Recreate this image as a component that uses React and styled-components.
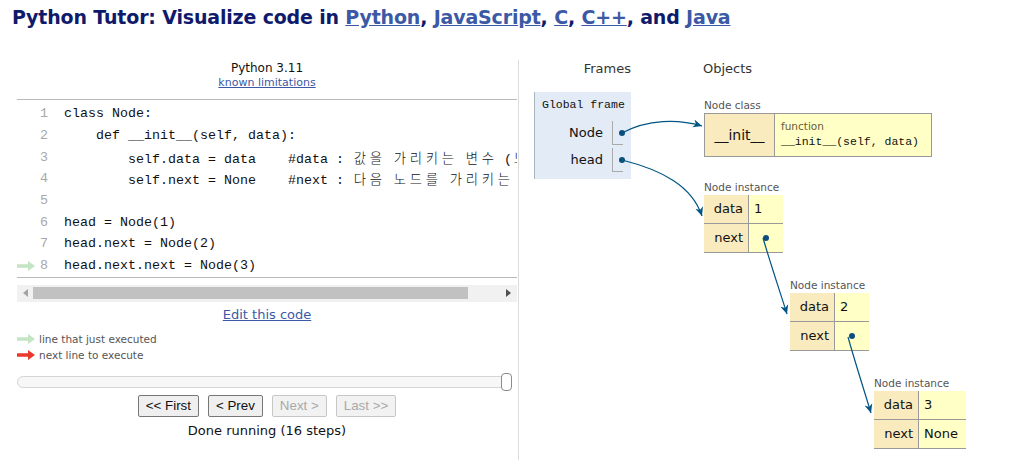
import React from 'react'
import styled, { createGlobalStyle } from 'styled-components'

const GlobalStyle = createGlobalStyle`
  html, body {
    margin: 0;
    padding: 0;
    background: #fff;
    font-family: "DejaVu Sans", Verdana, sans-serif;
  }
`

const Page = styled.div`
  position: relative;
  width: 1014px;
  height: 460px;
  overflow: hidden;
`

const Title = styled.h1`
  margin: 0;
  padding: 5px 0 0 12px;
  font-size: 19px;
  letter-spacing: -0.17px;
  line-height: 24px;
  font-weight: bold;
  color: #0f1a6b;
  white-space: nowrap;
`

const TitleLink = styled.a`
  color: #3c59a6;
  text-decoration: underline;
`

const Main = styled.div`
  display: flex;
  margin-top: 31px;
`

const CodePane = styled.div`
  width: 500px;
  margin-left: 17px;
  display: flex;
  flex-direction: column;
`

const LangLabel = styled.div`
  text-align: center;
  font-size: 12px;
  line-height: 16px;
  color: #111;
`

const SmallLink = styled.a`
  display: block;
  text-align: center;
  font-size: 11px;
  line-height: 14px;
  color: #3c59a6;
  text-decoration: underline;
`

const CodeBox = styled.div`
  margin-top: 9px;
  border-top: 1px solid #bbb;
  border-bottom: 1px solid #bbb;
  padding-top: 3px;
  overflow: hidden;
`

const CodeRow = styled.div`
  display: flex;
  align-items: center;
  height: 21.7px;
  font-family: "Liberation Mono", "Noto Sans CJK KR", monospace;
  font-size: 13.33px;
  white-space: pre;
`

const ArrowCell = styled.span`
  flex-shrink: 0;
  width: 18px;
  height: 10px;
  display: flex;
  align-items: center;
`

const LineNo = styled.span`
  flex-shrink: 0;
  width: 13px;
  text-align: right;
  color: #a8a8a8;
  margin-right: 16px;
`

const CodeText = styled.span`
  flex-shrink: 0;
  color: #111;
`

const HangulChar = styled.span`
  display: inline-block;
  width: 16px;
  text-align: center;
  font-family: "Noto Sans CJK KR", sans-serif;
  font-weight: 300;
`

const ScrollTrack = styled.div`
  margin-top: 7px;
  height: 17px;
  background: #f1f1f1;
  display: flex;
  align-items: center;
  padding: 0 6px;
  gap: 5px;
`

const ScrollThumb = styled.div`
  width: 435px;
  height: 12px;
  background: #c1c1c1;
`

const ScrollSpacer = styled.div`
  flex: 1;
`

const EditLink = styled.a`
  display: block;
  margin-top: 5px;
  text-align: center;
  font-size: 13px;
  line-height: 16px;
  color: #3c59a6;
  text-decoration: underline;
`

const Legend = styled.div`
  margin-top: 8px;
  display: flex;
  flex-direction: column;
`

const LegendRow = styled.div`
  display: flex;
  align-items: center;
  gap: 4px;
  height: 16px;
  font-size: 10.5px;
  color: #555;
`

const SliderTrack = styled.div`
  margin-top: 10px;
  height: 18px;
  display: flex;
  align-items: center;
`

const SliderBar = styled.div`
  flex: 1;
  height: 10px;
  border: 1px solid #d6d6d6;
  border-radius: 6px;
  background: #f7f7f7;
`

const SliderHandle = styled.div`
  width: 9px;
  height: 16px;
  margin-left: -6px;
  margin-right: 5px;
  border: 1px solid #8a8a8a;
  border-radius: 4px;
  background: #fff;
`

const ButtonRow = styled.div`
  margin-top: 4px;
  display: flex;
  justify-content: center;
  gap: 9px;
`

const NavButton = styled.button`
  height: 22px;
  padding: 0 7px;
  font-family: "Liberation Sans", Arial, sans-serif;
  font-size: 13.33px;
  border-radius: 2px;
  border: 1px solid ${p => (p.disabled ? '#c6c6c6' : '#767676')};
  background: ${p => (p.disabled ? '#f2f2f2' : '#efefef')};
  color: ${p => (p.disabled ? '#a9a9a9' : '#111')};
`

const Status = styled.div`
  margin-top: 6px;
  text-align: center;
  font-size: 13px;
  line-height: 16px;
  color: #111;
`

const VizPane = styled.div`
  flex: 1;
  margin-left: 1px;
  border-left: 1px solid #dcdcdc;
  height: 400px;
  display: flex;
`

const FramesCol = styled.div`
  margin-left: 15px;
  width: 97px;
`

const Header = styled.div`
  font-size: 13px;
  line-height: 18px;
  color: #333;
  text-align: ${p => p.align || 'left'};
`

const FrameBox = styled.div`
  margin-top: 14px;
  background: #e2ebf6;
  border-left: 1px solid #a9b6bf;
  padding: 6px 8px 7px 7px;
`

const FrameName = styled.div`
  font-family: "Liberation Mono", monospace;
  font-size: 11.5px;
  line-height: 14px;
  color: #111;
  white-space: nowrap;
  margin-bottom: 9px;
`

const VarGrid = styled.div`
  display: grid;
  grid-template-columns: 1fr auto;
  column-gap: 9px;
  row-gap: 3px;
`

const VarName = styled.div`
  text-align: right;
  font-size: 13px;
  line-height: 24px;
  color: #111;
`

const VarSlot = styled.div`
  width: 10px;
  height: 23px;
  border-left: 1px solid #aaa;
  border-bottom: 1px solid #aaa;
  display: flex;
  align-items: center;
  justify-content: flex-end;
`

const Dot = styled.span`
  display: block;
  width: 6px;
  height: 6px;
  border-radius: 50%;
  background: #0d4f7c;
  margin-right: ${p => p.mr || 0}px;
`

const HeapCol = styled.div`
  position: relative;
  margin-left: 72px;
  flex: 1;
`

const HeapObj = styled.div`
  position: absolute;
  left: ${p => p.x}px;
  top: ${p => p.y}px;
`

const ObjLabel = styled.div`
  font-size: 10.5px;
  line-height: 15px;
  color: #555;
  white-space: nowrap;
`

const ClassBox = styled.div`
  display: flex;
  border: 1px solid #999;
  height: 42px;
`

const ClassKey = styled.div`
  width: 69px;
  background: #faebbf;
  border-right: 1px solid #999;
  display: flex;
  align-items: center;
  justify-content: center;
  font-size: 14px;
  color: #111;
`

const ClassVal = styled.div`
  width: 150px;
  background: #ffffc6;
  padding: 6px 0 0 6px;
`

const FuncTag = styled.div`
  font-size: 10.5px;
  line-height: 13px;
  color: #6b5b3a;
`

const FuncSig = styled.div`
  font-family: "Liberation Mono", monospace;
  font-size: 11.5px;
  line-height: 17px;
  color: #111;
`

const InstTable = styled.div`
  display: grid;
  grid-template-columns: 44px auto;
`

const InstKey = styled.div`
  height: 28px;
  background: #faebbf;
  border-bottom: 1px solid #999;
  text-align: right;
  padding-right: 5px;
  font-size: 13px;
  line-height: 28px;
  color: #111;
`

const InstVal = styled.div`
  height: 28px;
  min-width: 21px;
  background: #ffffc6;
  border-bottom: 1px solid #999;
  border-left: 1px solid #999;
  padding: 0 ${p => (p.pointer ? 0 : 8)}px 0 ${p => (p.pointer ? 0 : 5)}px;
  font-size: 13px;
  line-height: 28px;
  color: #111;
  display: flex;
  align-items: center;
  justify-content: ${p => (p.pointer ? 'center' : 'flex-start')};
`

const ArrowLayer = styled.svg`
  position: absolute;
  left: 0;
  top: 0;
  pointer-events: none;
`

const LineArrow = ({ color }) => (
  <svg width="18" height="10" viewBox="0 0 18 10">
    <path d="M0 3.3 H11 V0 L18 5 L11 10 V6.7 H0 Z" fill={color} />
  </svg>
)

// Hangul glyphs sit in double-width cells, as in a CJK monospace font
const splitHangul = (text) =>
  Array.from(text).map((ch, i) =>
    /[\uac00-\ud7a3]/.test(ch) ? <HangulChar key={i}>{ch}</HangulChar> : ch
  )

const code = [
  'class Node:',
  '    def __init__(self, data):',
  '        self.data = data    #data : 값을 가리키는 변수 (노드의 값)',
  '        self.next = None    #next : 다음 노드를 가리키는 변수',
  '',
  'head = Node(1)',
  'head.next = Node(2)',
  'head.next.next = Node(3)',
]

const instances = [
  { x: 1, y: 120, data: '1', next: null },
  { x: 87, y: 218, data: '2', next: null },
  { x: 171, y: 316, data: '3', next: 'None' },
]

const pointers = [
  'M622 133 C648 119 678 119 702 126',
  'M622 160 C662 170 692 186 702 216',
  'M763 238 C770 262 780 292 787 314',
  'M848 337 C855 362 864 390 871 413',
]

const App = () => (
  <Page>
    <GlobalStyle />
    <Title>
      Python Tutor: Visualize code in <TitleLink>Python</TitleLink>, <TitleLink>JavaScript</TitleLink>,{' '}
      <TitleLink>C</TitleLink>, <TitleLink>C++</TitleLink>, and <TitleLink>Java</TitleLink>
    </Title>
    <Main>
      <CodePane>
        <LangLabel>Python 3.11</LangLabel>
        <SmallLink>known limitations</SmallLink>
        <CodeBox>
          {code.map((line, i) => (
            <CodeRow key={i}>
              <ArrowCell>{i === 7 && <LineArrow color="#c4e4c4" />}</ArrowCell>
              <LineNo>{i + 1}</LineNo>
              <CodeText>{splitHangul(line)}</CodeText>
            </CodeRow>
          ))}
        </CodeBox>
        <ScrollTrack>
          <svg width="5" height="8" viewBox="0 0 5 8"><path d="M5 0 V8 L0 4 Z" fill="#a3a3a3" /></svg>
          <ScrollThumb />
          <ScrollSpacer />
          <svg width="5" height="8" viewBox="0 0 5 8"><path d="M0 0 V8 L5 4 Z" fill="#505050" /></svg>
        </ScrollTrack>
        <EditLink>Edit this code</EditLink>
        <Legend>
          <LegendRow><LineArrow color="#c4e4c4" />line that just executed</LegendRow>
          <LegendRow><LineArrow color="#e8392f" />next line to execute</LegendRow>
        </Legend>
        <SliderTrack>
          <SliderBar />
          <SliderHandle />
        </SliderTrack>
        <ButtonRow>
          <NavButton>&lt;&lt; First</NavButton>
          <NavButton>&lt; Prev</NavButton>
          <NavButton disabled>Next &gt;</NavButton>
          <NavButton disabled>Last &gt;&gt;</NavButton>
        </ButtonRow>
        <Status>Done running (16 steps)</Status>
      </CodePane>
      <VizPane>
        <FramesCol>
          <Header align="right">Frames</Header>
          <FrameBox>
            <FrameName>Global frame</FrameName>
            <VarGrid>
              <VarName>Node</VarName>
              <VarSlot><Dot mr={-2} /></VarSlot>
              <VarName>head</VarName>
              <VarSlot><Dot mr={-2} /></VarSlot>
            </VarGrid>
          </FrameBox>
        </FramesCol>
        <HeapCol>
          <Header>Objects</Header>
          <HeapObj x={1} y={38}>
            <ObjLabel>Node class</ObjLabel>
            <ClassBox>
              <ClassKey>__init__</ClassKey>
              <ClassVal>
                <FuncTag>function</FuncTag>
                <FuncSig>__init__(self, data)</FuncSig>
              </ClassVal>
            </ClassBox>
          </HeapObj>
          {instances.map((obj, i) => (
            <HeapObj key={i} x={obj.x} y={obj.y}>
              <ObjLabel>Node instance</ObjLabel>
              <InstTable>
                <InstKey>data</InstKey>
                <InstVal>{obj.data}</InstVal>
                <InstKey>next</InstKey>
                {obj.next ? <InstVal>{obj.next}</InstVal> : <InstVal pointer><Dot /></InstVal>}
              </InstTable>
            </HeapObj>
          ))}
        </HeapCol>
      </VizPane>
    </Main>
    <ArrowLayer width="1014" height="460" viewBox="0 0 1014 460">
      <defs>
        <marker id="head" viewBox="0 0 10 10" refX="10" refY="5" markerWidth="9" markerHeight="9" orient="auto" markerUnits="userSpaceOnUse">
          <path d="M0 0.5 L10 5 L0 9.5 L3 5 Z" fill="#005583" />
        </marker>
      </defs>
      {pointers.map((d, i) => (
        <path key={i} d={d} fill="none" stroke="#005583" strokeWidth="1.2" markerEnd="url(#head)" />
      ))}
    </ArrowLayer>
  </Page>
)

export default App
